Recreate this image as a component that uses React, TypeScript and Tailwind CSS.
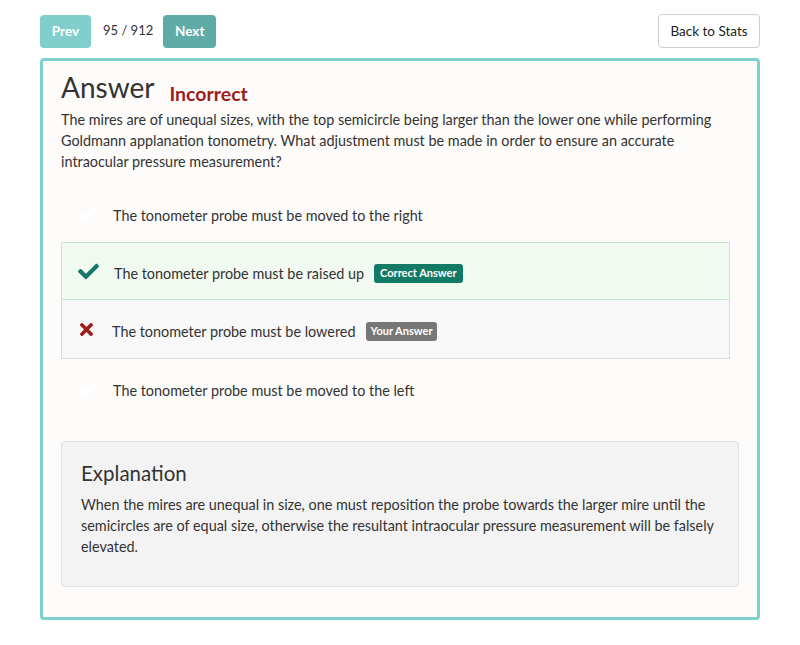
import React from "react";
import { FaCheck, FaTimes } from "react-icons/fa";

type Option = {
	text: string;
	state: "none" | "correct" | "wrong";
};

const options: Option[] = [
	{ text: "The tonometer probe must be moved to the right", state: "none" },
	{ text: "The tonometer probe must be raised up", state: "correct" },
	{ text: "The tonometer probe must be lowered", state: "wrong" },
	{ text: "The tonometer probe must be moved to the left", state: "none" },
];

const OptionRow = ({ option }: { option: Option }) => {
	if (option.state === "correct") {
		return (
			<div className="h-[58px] flex items-center border border-[#c9e8c9] bg-[#f1faf0] pl-[16px]">
				<FaCheck className="text-[#16786a] text-[21px] shrink-0" />
				<span className="ml-[15px] mt-[5px]">{option.text}</span>
				<span className="ml-[10px] mt-[4px] rounded-[3px] bg-[#137a66] px-[6px] h-[19px] flex items-center text-[11px] font-bold text-white">
					Correct Answer
				</span>
			</div>
		);
	}
	if (option.state === "wrong") {
		return (
			<div className="h-[59px] flex items-center border border-t-0 border-[#dcdcdc] bg-[#f8f8f8] pl-[15px]">
				<FaTimes className="text-[#a01b1b] text-[19px] shrink-0" />
				<span className="ml-[16px] mt-[5px]">{option.text}</span>
				<span className="ml-[10px] mt-[4px] rounded-[3px] bg-[#777777] px-[5px] h-[19px] flex items-center text-[11px] font-bold text-white">
					Your Answer
				</span>
			</div>
		);
	}
	return (
		<div className="h-[58px] flex items-center pl-[15px] border border-transparent">
			<FaCheck className="text-white text-[21px] shrink-0" />
			<span className="ml-[15px] mt-[5px]">{option.text}</span>
		</div>
	);
};

export default function App() {
	return (
		<div
			className="w-[800px] h-[645px] bg-white text-[#333] px-[40px] pt-[14px]"
			style={{ fontFamily: "Lato, 'Open Sans', sans-serif" }}
		>
			<div className="flex items-center justify-between">
				<div className="flex items-center">
					<button className="h-[33px] w-[51px] rounded-[4px] bg-[#80cfcc] text-white text-[13.5px] font-bold">
						Prev
					</button>
					<span className="ml-[12px] text-[13px] text-[#333]">95 / 912</span>
					<button className="ml-[10px] h-[33px] w-[53px] rounded-[4px] bg-[#5eaba7] text-white text-[13.5px] font-bold">
						Next
					</button>
				</div>
				<button className="h-[34px] w-[102px] rounded-[4px] border border-[#cfcfcf] bg-white text-[13.5px] text-[#222]">
					Back to Stats
				</button>
			</div>

			<div className="mt-[10px] h-[562px] rounded-[4px] border-[3px] border-[#7dd0cc] bg-[#fdfcfa] px-[18px] pt-[6px]">
				<div className="flex items-baseline">
					<h2 className="text-[28px] leading-[40px] text-[#333]">Answer</h2>
					<span className="relative top-[3px] ml-[15px] text-[19.5px] font-bold text-[#9c1c1c]">Incorrect</span>
				</div>
				<p className="mt-[2px] text-[14.4px] leading-[21px] text-[#333]">
					The mires are of unequal sizes, with the top semicircle being larger than the lower one while performing
					Goldmann applanation tonometry. What adjustment must be made in order to ensure an accurate intraocular
					pressure measurement?
				</p>

				<div className="mt-[12px] mr-[9px] text-[14.4px] text-[#333]">
					{options.map((o, i) => (
						<OptionRow key={i} option={o} />
					))}
				</div>

				<div className="mt-[24px] h-[146px] rounded-[4px] border border-[#e2e2e2] bg-[#f3f3f3] px-[19px] pt-[17px]">
					<h3 className="text-[20.5px] leading-[28px] text-[#333]">Explanation</h3>
					<p className="mt-[7px] text-[14.4px] leading-[21px] text-[#333]">
						When the mires are unequal in size, one must reposition the probe towards the larger mire until the
						semicircles are of equal size, otherwise the resultant intraocular pressure measurement will be falsely
						elevated.
					</p>
				</div>
			</div>
		</div>
	);
}
